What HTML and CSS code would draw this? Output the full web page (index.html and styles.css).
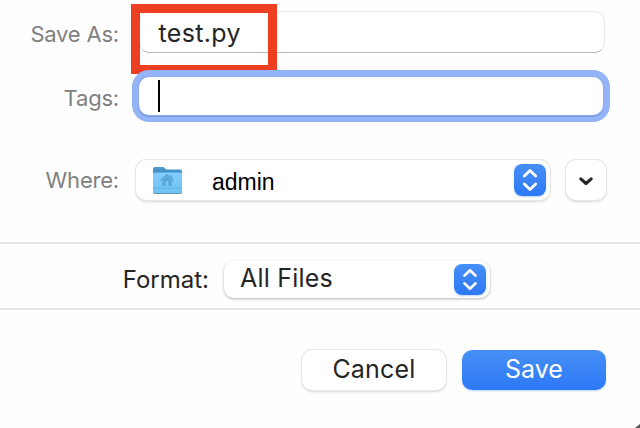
FILE: index.html
```html
<!DOCTYPE html>
<html lang="en">
<head>
<meta charset="utf-8">
<title>Save</title>
<link rel="stylesheet" href="styles.css">
</head>
<body>
<main class="dialog">
  <section class="fields">
    <div class="row row-name">
      <span class="label label-name">Save As:</span>
      <div class="field"><span class="filename">test.py</span></div>
      <div class="highlight"></div>
    </div>
    <div class="row row-tags">
      <span class="label label-tags">Tags:</span>
      <div class="field focused"><span class="caret"></span></div>
    </div>
    <div class="row row-where">
      <span class="label label-where">Where:</span>
      <div class="popup">
        <svg class="folder" width="32" height="30" viewBox="0 0 32 30">
          <defs>
            <linearGradient id="back" x1="0" y1="0" x2="0" y2="1"><stop offset="0" stop-color="#529fd3"/><stop offset=".3" stop-color="#3685bf"/></linearGradient>
            <linearGradient id="front" x1="0" y1="0" x2="0" y2="1"><stop offset="0" stop-color="#80ceff"/><stop offset="1" stop-color="#71c1f3"/></linearGradient>
          </defs>
          <path d="M1 3.2Q1 1 3 1H10.5Q12 1 13 2.3T15.5 3.5H28Q30 3.5 30 5.5V26H1Z" fill="url(#back)"/>
          <path d="M1 8Q1 6.5 2.5 6.5H28.5Q30 6.5 30 8V26Q30 27.5 28.5 27.5H2.5Q1 27.5 1 26Z" fill="url(#front)"/>
          <path d="M1 22.2H30" stroke="#58addf" stroke-width=".8"/>
          <path d="M1.3 26.9Q2 27.5 3 27.5H28Q29.3 27.5 29.8 26.8" fill="none" stroke="#6496b5"/>
          <path d="M8.5 14.7 15 8.5 21.5 14.7M19.5 12.3V9.2" fill="none" stroke="#539fd0" stroke-width="1.2"/>
          <path d="M10.3 14.4 15 10 19.7 14.4V20H16.5V16.2Q16.5 15 15 15T13.5 16.2V20H10.3Z" fill="#58a6d6"/>
        </svg>
        <span class="place">admin</span>
        <span class="stepper"><svg width="32" height="32" viewBox="0 0 32 32"><path d="M10.3 12 16 6.5 21.7 12M10.3 20 16 25.5 21.7 20"/></svg></span>
      </div>
      <div class="expand"><svg width="40" height="40" viewBox="0 0 40 40"><path d="M14.8 18.8 20 23.5 25.2 18.8"/></svg></div>
    </div>
  </section>
  <section class="format">
    <span class="format-label">Format:</span>
    <div class="popup popup-format">
      <span class="filetype">All Files</span>
      <span class="stepper"><svg width="32" height="31" viewBox="0 0 32 32"><path d="M10.3 12 16 6.5 21.7 12M10.3 20 16 25.5 21.7 20"/></svg></span>
    </div>
  </section>
  <footer class="actions">
    <button class="button" type="button"><span class="cancel-text">Cancel</span></button>
    <button class="button primary" type="button"><span class="save-text">Save</span></button>
  </footer>
  <div class="corner"></div>
</main>
</body>
</html>
```

FILE: styles.css
```css
* { box-sizing: border-box; }

body {
  margin: 0;
  background: #fefefe;
  font-family: Inter, "Liberation Sans", sans-serif;
  font-size: 23px;
  line-height: 28px;
  color: #252525;
  white-space: nowrap;
}

.dialog {
  position: relative;
  width: 640px;
  height: 428px;
  overflow: hidden;
}

.fields {
  height: 242px;
  padding-top: 12px;
}

.row {
  position: relative;
  display: flex;
  align-items: center;
}

.row-name { height: 41px; }
.row-tags { height: 40px; margin-top: 23px; }
.row-where { height: 40px; margin-top: 44px; }

.label {
  width: 119px;
  flex: none;
  text-align: right;
  font-size: 22px;
  letter-spacing: -0.2px;
  color: #808080;
}

.label-name { padding-top: 3px; }
.label-tags { padding-top: 4px; }
.label-where { padding-top: 0; }

.field {
  width: 466px;
  height: 41px;
  margin-left: 20px;
  padding: 7px 0 0 18.5px;
  border: 1px solid #e9e9e9;
  border-bottom-color: #b9b9b9;
  border-radius: 10px;
  background: #fff;
}

.row-name .field { margin-top: -1px; height: 42px; }

.filename {
  display: block;
  line-height: 28px;
  font-size: 25px;
  letter-spacing: 0.35px;
}

.highlight {
  position: absolute;
  left: 130.5px;
  top: -8px;
  width: 146.5px;
  height: 69.5px;
  border: 9px solid #ed4023;
}

.focused {
  width: 464px;
  height: 38px;
  padding: 2px 0 0 19px;
  border: 0;
  box-shadow: 0 0 0 1px #8aabed, 0 1px 0 1px #7699db, 0 0 0 7px #94b4f7;
}

.caret {
  display: block;
  width: 2px;
  height: 32px;
  margin-top: 1px;
  background: #000;
}

.popup, .expand, .button {
  background: #fff;
  border-radius: 10px;
  box-shadow: 0 0 0 1px #e7e7e7, 0 1px 1px #aaa, 0 2px 3px #ddd;
}

.popup {
  display: flex;
  align-items: center;
  width: 414px;
  height: 40px;
  margin-left: 17px;
  padding: 0 4px 0 16px;
}

.folder { flex: none; margin-top: 2px; }

.place {
  margin: 3px 0 0 28px;
  font-family: "Liberation Sans", sans-serif;
  font-size: 23px;
  color: #000;
}

.stepper {
  width: 32px;
  height: 32px;
  margin-left: auto;
  border-radius: 8px;
  background: linear-gradient(#478ff7, #2d78f6);
  box-shadow: 0 1px 2px #bbd4fb;
}

svg { display: block; }

.stepper path, .expand path {
  fill: none;
  stroke: #fff;
  stroke-width: 2.8;
  stroke-linecap: round;
  stroke-linejoin: round;
}

.expand {
  width: 40px;
  height: 40px;
  margin-left: 16px;
}

.expand path { stroke: #252525; stroke-width: 3.1; }

.format {
  display: flex;
  align-items: flex-start;
  height: 68px;
  padding-top: 17px;
  border-top: 2px solid #e5e5e5;
  border-bottom: 2px solid #e5e5e5;
}

.format-label {
  width: 209px;
  padding-top: 5px;
  text-align: right;
  font-size: 24px;
}

.popup-format {
  width: 266px;
  height: 37px;
  margin-left: 15px;
  padding-left: 16px;
  box-shadow: 0 1px 1px #d0d0d0, 0 1px 3px #bbb;
}

.popup-format .stepper { height: 31px; margin-top: 0; }

.filetype {
  margin-top: -4px;
  font-size: 25px;
  letter-spacing: 0.2px;
}

.actions {
  display: flex;
  justify-content: flex-end;
  gap: 16px;
  padding: 40px 34px 0 0;
}

.button {
  width: 144px;
  height: 40px;
  padding: 0 0 2px;
  border: 0;
  font: inherit;
  font-size: 25px;
  color: #252525;
}

.cancel-text { letter-spacing: 0.2px; }

.primary {
  background: linear-gradient(#478ff7, #2d78f6);
  color: #fff;
  box-shadow: 0 1px 2px #bbd4fb;
}

.corner {
  position: absolute;
  right: 0;
  bottom: 0;
  width: 5px;
  height: 4px;
  background: #555;
  clip-path: polygon(100% 0, 100% 100%, 0 100%);
}
```
